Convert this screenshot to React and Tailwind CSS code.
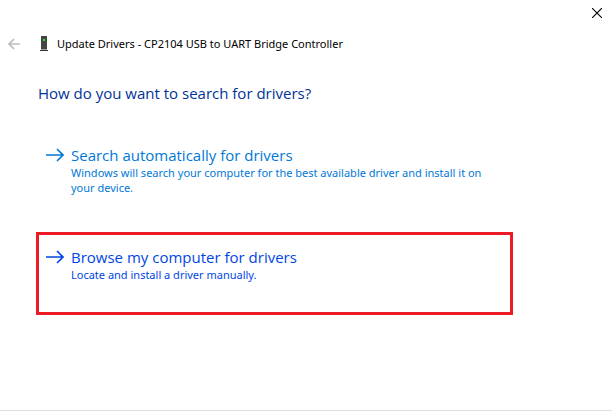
const options = [
    {
        title: "Search automatically for drivers",
        text: "Windows will search your computer for the best available driver and install it on your device.",
        className: "border-transparent text-[#0078d7]",
    },
    {
        title: "Browse my computer for drivers",
        text: "Locate and install a driver manually.",
        className: "border-[#ed1c24] text-[#0046e6]",
    },
];

const DeviceIcon = () => (
    <svg className="ml-5 shrink-0" width="8" height="16" viewBox="0 0 8 16" shapeRendering="crispEdges" aria-hidden="true">
        <path d="M1 0h6v13H1z" fill="#444444" />
        <path d="M1 13h6v1H1z" fill="#a0a0a0" />
        <path d="M0 14h8v1H0z" fill="#333333" />
        <path d="M3 3h2v2H3z" fill="#00ff20" />
    </svg>
);

const Option = ({ title, text, className }) => (
    <button type="button" className={`flex min-h-[83px] w-full items-start border-3 pt-3 pr-4 pl-[7px] text-left ${className}`}>
        <svg className="mt-[3px] mr-[7px] shrink-0" width="18" height="14" viewBox="0 0 18 14" fill="none" stroke="currentColor" strokeWidth="1.6" aria-hidden="true">
            <path d="M0 7h17M11 1l6 6-6 6" />
        </svg>
        <span className="block">
            <span className="block text-[15px] leading-5">{title}</span>
            <span className="block font-['Noto_Sans','Open_Sans',sans-serif] text-[11px] leading-[15px]">{text}</span>
        </span>
    </button>
);

const App = () => {
    return (
        <div className="flex min-h-screen flex-col border-b border-[#dfdfdf] bg-white font-['Open_Sans','Noto_Sans',sans-serif]">
            {/* Title bar */}
            <div className="flex justify-end pt-2 pr-2.5">
                <button type="button" aria-label="Close">
                    <svg width="10" height="10" viewBox="0 0 10 10" fill="none" stroke="#000" strokeWidth="1.1">
                        <path d="M0 0l10 10M10 0L0 10" />
                    </svg>
                </button>
            </div>
            <header className="flex items-center pt-4 pl-2">
                <button type="button" aria-label="Back" disabled>
                    <svg width="12" height="12" viewBox="0 0 12 12" fill="none" stroke="#bdbdbd" strokeWidth="1.7">
                        <path d="M12 6H1M6 1L1 6l5 5" />
                    </svg>
                </button>
                <DeviceIcon />
                <span className="ml-[9px] font-['Noto_Sans','Open_Sans',sans-serif] text-[11px] leading-5 text-black">
                    Update Drivers - CP2104 USB to UART Bridge Controller
                </span>
            </header>

            <main className="pt-[27px] pr-[99px] pl-9">
                <h1 className="pl-0.5 text-[15px] leading-6 text-[#003399]">
                    How do you want to search for drivers?
                </h1>
                <div className="flex flex-col gap-[19px] pt-[25px]">
                    {options.map((option) => (
                        <Option key={option.title} {...option} />
                    ))}
                </div>
            </main>
        </div>
    );
};

export default App;
